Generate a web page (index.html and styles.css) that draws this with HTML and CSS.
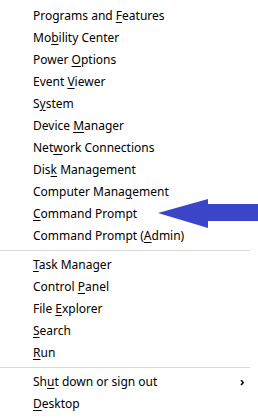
FILE: index.html
```html
<!DOCTYPE html>
<html lang="en">
<head>
    <meta charset="UTF-8">
    <meta name="viewport" content="width=device-width, initial-scale=1.0">
    <title>Quick Link Menu</title>
    <link rel="stylesheet" href="styles.css">
</head>
<body>
    <div class="menu">
        <div class="item">Programs and <u>F</u>eatures</div>
        <div class="item">Mo<u>b</u>ility Center</div>
        <div class="item">Power <u>O</u>ptions</div>
        <div class="item">Event <u>V</u>iewer</div>
        <div class="item">S<u>y</u>stem</div>
        <div class="item">Device <u>M</u>anager</div>
        <div class="item">Net<u>w</u>ork Connections</div>
        <div class="item">Dis<u>k</u> Management</div>
        <div class="item">Computer Mana<u>g</u>ement</div>
        <div class="item pointed">
            <span><u>C</u>ommand Prompt</span>
            <svg class="arrow" width="100" height="32" viewBox="0 0 100 32">
                <path d="M0 15 L50 1 L50 6 L100 6 L100 23 L50 23 L50 30 Z" fill="#3a45c8"/>
            </svg>
        </div>
        <div class="item">Command Prompt (<u>A</u>dmin)</div>
        <div class="sep"></div>
        <div class="item"><u>T</u>ask Manager</div>
        <div class="item">Control <u>P</u>anel</div>
        <div class="item">File <u>E</u>xplorer</div>
        <div class="item"><u>S</u>earch</div>
        <div class="item"><u>R</u>un</div>
        <div class="sep"></div>
        <div class="item">Sh<u>u</u>t down or sign out <span class="chev">&#x203A;</span></div>
        <div class="item"><u>D</u>esktop</div>
    </div>
</body>
</html>
```
FILE: styles.css
```css
* {
  margin: 0;
  padding: 0;
  box-sizing: border-box;
}

body {
  background: #ffffff;
  font-family: 'Noto Sans', 'Open Sans', sans-serif;
  font-size: 12px;
  color: #000000;
}

.menu {
  padding-top: 5px;
  width: 258px;
}

.item {
  position: relative;
  height: 22px;
  line-height: 22px;
  padding-left: 33px;
  white-space: nowrap;
}

.item u {
  text-decoration-thickness: 1px;
  text-underline-offset: 2px;
}

.sep {
  height: 1px;
  margin: 3px 8px 3px 0;
  background: #d9d9d9;
}

.chev {
  position: absolute;
  left: 240px;
  top: 0;
  font-weight: bold;
}

.arrow {
  position: absolute;
  left: 158px;
  top: -5px;
}
```
